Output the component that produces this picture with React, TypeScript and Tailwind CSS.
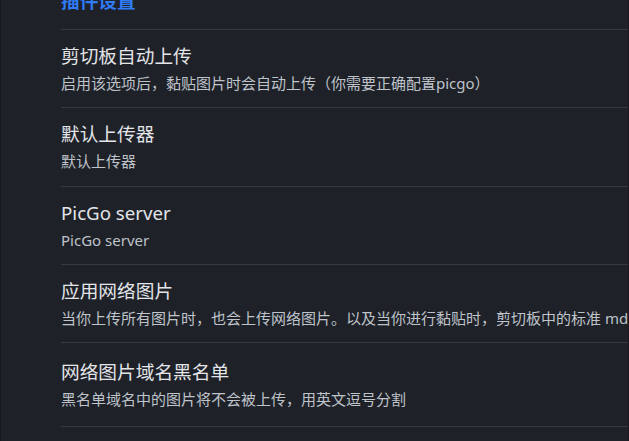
const items = [
  { title: "剪切板自动上传", desc: "启用该选项后，黏贴图片时会自动上传（你需要正确配置picgo）" },
  { title: "默认上传器", desc: "默认上传器" },
  { title: "PicGo server", desc: "PicGo server" },
  {
    title: "应用网络图片",
    desc: "当你上传所有图片时，也会上传网络图片。以及当你进行黏贴时，剪切板中的标准 md 图片会被上传",
  },
  { title: "网络图片域名黑名单", desc: "黑名单域名中的图片将不会被上传，用英文逗号分割" },
];

export default function App() {
  return (
    <div
      className="h-[441px] w-[629px] overflow-hidden bg-[#1e2128] border-l border-r border-[#16181d]"
      style={{ fontFamily: '"Segoe UI", "Noto Sans", "Noto Sans CJK SC", sans-serif' }}
    >
      <div className="pl-[60px]">
        {/* 标题 */}
        <h2 className="mt-[-11px] mb-[16px] h-[24px] leading-[24px] text-[18.7px] font-bold text-[#2f7cf6] whitespace-nowrap">
          插件设置
        </h2>

        {items.map((item, i) => (
          <div
            key={item.title}
            className={`border-t border-[#363940] ${
              i === items.length - 1
                ? "pt-[17px] pb-[17px] border-b"
                : i === 1
                ? "pt-[14px] pb-[15px]"
                : "py-[14px]"
            }`}
          >
            <div className="h-[24px] leading-[24px] text-[18.7px] text-[#e3e5e8] whitespace-nowrap">
              {item.title}
            </div>
            <div className="mt-[5px] h-[20px] leading-[20px] text-[15px] text-[#bfc3ca] whitespace-nowrap">
              {item.desc}
            </div>
          </div>
        ))}
      </div>
    </div>
  );
}
